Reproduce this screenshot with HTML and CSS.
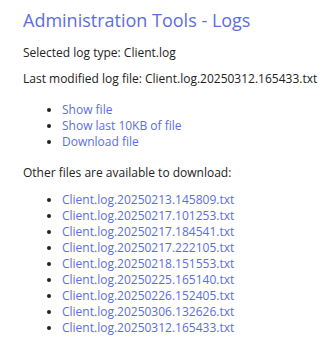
FILE: index.html
```html
<!DOCTYPE html>
<html>
<head>
<meta charset="utf-8">
<link rel="stylesheet" href="styles.css">
</head>
<body>
<div class="page">
  <h1 class="title">Administration Tools - Logs</h1>
  <p class="line">Selected log type: Client.log</p>
  <p class="line lead">Last modified log file: Client.log.20250312.165433.txt</p>
  <ul class="links">
    <li><a href="#">Show file</a></li>
    <li><a href="#">Show last 10KB of file</a></li>
    <li><a href="#">Download file</a></li>
  </ul>
  <p class="line other">Other files are available to download:</p>
  <ul class="links">
    <li><a href="#">Client.log.20250213.145809.txt</a></li>
    <li><a href="#">Client.log.20250217.101253.txt</a></li>
    <li><a href="#">Client.log.20250217.184541.txt</a></li>
    <li><a href="#">Client.log.20250217.222105.txt</a></li>
    <li><a href="#">Client.log.20250218.151553.txt</a></li>
    <li><a href="#">Client.log.20250225.165140.txt</a></li>
    <li><a href="#">Client.log.20250226.152405.txt</a></li>
    <li><a href="#">Client.log.20250306.132626.txt</a></li>
    <li><a href="#">Client.log.20250312.165433.txt</a></li>
  </ul>
</div>
</body>
</html>
```
FILE: styles.css
```css
html, body {
  margin: 0;
  padding: 0;
  background: #ffffff;
}
body {
  font-family: "Open Sans", "Liberation Sans", sans-serif;
  font-size: 12px;
  line-height: 16px;
  color: #222222;
}
.page {
  padding: 8px 0 0 23px;
}
.title {
  margin: 0 0 13px 0;
  font-size: 18px;
  line-height: 24px;
  font-weight: 400;
  color: #5b6ee0;
}
.line {
  margin: 0 0 10px 0;
}
.line.lead {
  margin-bottom: 15px;
}
.line.other {
  margin-bottom: 11px;
}
.links {
  margin: 0 0 15px 0;
  padding-left: 39px;
}
.links li {
  line-height: 16px;
}
.links a {
  color: #5b6ee0;
  text-decoration: none;
}
```
